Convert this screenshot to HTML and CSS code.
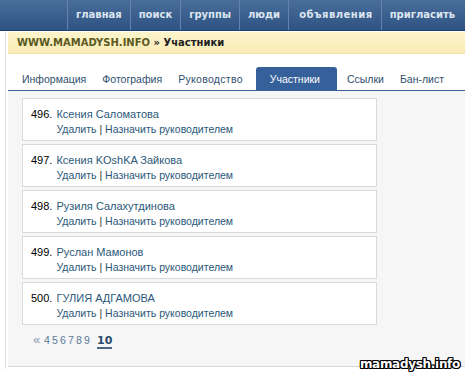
FILE: index.html
```html
<!DOCTYPE html>
<html lang="ru">
<head>
    <meta charset="UTF-8">
    <title>Участники</title>
    <link rel="stylesheet" href="styles.css">
</head>
<body>
    <div class="topbar">
        <div class="logo-space"></div>
        <nav class="menu">
            <a href="#">главная</a>
            <a href="#">поиск</a>
            <a href="#">группы</a>
            <a href="#">люди</a>
            <a href="#">объявления</a>
            <a href="#">пригласить</a>
        </nav>
    </div>

    <div class="page">
        <div class="crumbs">
            <span class="site">WWW.MAMADYSH.INFO</span> » Участники
        </div>

        <ul class="tabs">
            <li><a href="#">Информация</a></li>
            <li><a href="#">Фотография</a></li>
            <li><a href="#">Руководство</a></li>
            <li class="active"><a href="#">Участники</a></li>
            <li><a href="#">Ссылки</a></li>
            <li><a href="#">Бан-лист</a></li>
        </ul>

        <div class="content">
            <div class="member">
                <span class="num">496.</span>
                <div class="info">
                    <a class="name" href="#">Ксения Саломатова</a>
                    <div class="actions"><a href="#">Удалить</a> | <a href="#">Назначить руководителем</a></div>
                </div>
            </div>
            <div class="member">
                <span class="num">497.</span>
                <div class="info">
                    <a class="name" href="#">Ксения KOshKA Зайкова</a>
                    <div class="actions"><a href="#">Удалить</a> | <a href="#">Назначить руководителем</a></div>
                </div>
            </div>
            <div class="member">
                <span class="num">498.</span>
                <div class="info">
                    <a class="name" href="#">Рузиля Салахутдинова</a>
                    <div class="actions"><a href="#">Удалить</a> | <a href="#">Назначить руководителем</a></div>
                </div>
            </div>
            <div class="member">
                <span class="num">499.</span>
                <div class="info">
                    <a class="name" href="#">Руслан Мамонов</a>
                    <div class="actions"><a href="#">Удалить</a> | <a href="#">Назначить руководителем</a></div>
                </div>
            </div>
            <div class="member">
                <span class="num">500.</span>
                <div class="info">
                    <a class="name" href="#">ГУЛИЯ АДГАМОВА</a>
                    <div class="actions"><a href="#">Удалить</a> | <a href="#">Назначить руководителем</a></div>
                </div>
            </div>

            <div class="pager">
                <a class="prev" href="#">«</a>
                <a href="#">4</a>
                <a href="#">5</a>
                <a href="#">6</a>
                <a href="#">7</a>
                <a href="#">8</a>
                <a href="#">9</a>
                <span class="current">10</span>
            </div>
        </div>
    </div>

    <div class="watermark">mamadysh.info</div>
</body>
</html>
```

FILE: styles.css
```css
:root {
    --bar-top: #4a6e9a;
    --bar-bottom: #2e5383;
    --link-color: #2b587a;
    --tab-blue: #36609a;
    --border-color: #dadada;
}

* {
    margin: 0;
    padding: 0;
    box-sizing: border-box;
}

body {
    font-family: 'Liberation Sans', Arial, sans-serif;
    font-size: 11px;
    color: #000;
    background-color: #fff;
    width: 465px;
    height: 374px;
    overflow: hidden;
    position: relative;
}

a {
    color: var(--link-color);
    text-decoration: none;
}

/* верхнее меню */
.topbar {
    display: flex;
    height: 31px;
    background: linear-gradient(to bottom, var(--bar-top), var(--bar-bottom));
    border-bottom: 1px solid #1f3f6a;
}

.logo-space {
    width: 67px;
    flex-shrink: 0;
}

.menu {
    display: flex;
}

.menu a {
    display: flex;
    align-items: center;
    padding: 0 8px 2px 8px;
    border-left: 1px solid #6384ad;
    color: #dde6f0;
    font-family: 'DejaVu Sans', sans-serif;
    font-weight: bold;
    font-size: 10px;
    white-space: nowrap;
}

.menu a:nth-child(5) {
    padding: 0 8px 2px 10px;
    letter-spacing: 0.5px;
}

.page {
    margin-left: 5px;
    margin-top: 1px;
    border-left: 1px solid #e2e2e2;
    height: 337px;
}

.crumbs {
    margin-left: 2px;
    height: 22px;
    padding: 5px 0 0 9px;
    background: linear-gradient(to bottom, #fdf4cc, #f8ebb6);
    border-bottom: 1px solid #efe2ae;
    font-family: 'DejaVu Sans', sans-serif;
    font-size: 10px;
    font-weight: bold;
    color: #1e1e1e;
}

.crumbs .site {
    color: #5c5a1e;
}

/* вкладки */
.tabs {
    list-style: none;
    display: flex;
    align-items: flex-end;
    margin-left: 2px;
    padding: 13px 0 0 6px;
    height: 37px;
    border-bottom: 1px solid var(--tab-blue);
}

.tabs li a {
    display: block;
    height: 23px;
    line-height: 24px;
    padding: 0 8px;
    color: #2f4f6e;
    font-size: 10.5px;
}

.tabs li:nth-child(3) a {
    letter-spacing: 0.3px;
}

.tabs li.active a {
    margin: 0 2px 0 5px;
    padding: 0 17px 0 14px;
    background-color: var(--tab-blue);
    color: #fff;
    border-radius: 3px 3px 0 0;
}

/* список участников */
.content {
    margin-left: 2px;
    height: 276px;
    padding: 7px 0 0 14px;
    background-color: #f6f6f6;
    border-bottom: 1px solid #d8d8d8;
}

.member {
    display: flex;
    gap: 4px;
    width: 355px;
    height: 43px;
    margin-bottom: 3px;
    padding: 8px 8px 0 8px;
    background-color: #fff;
    border: 1px solid var(--border-color);
    line-height: 15px;
}

.member .num,
.member .name {
    font-size: 11px;
}

.actions {
    color: #333;
    font-size: 10.5px;
}

.pager {
    display: flex;
    align-items: baseline;
    gap: 2px;
    padding: 4px 0 0 11px;
    font-size: 10.5px;
}

.pager a {
    color: #5c7a98;
    width: 6px;
}

.pager .prev {
    color: #8a9bb0;
    font-size: 13px;
    width: 9px;
}

.pager .current {
    margin-left: 5px;
    font-family: 'DejaVu Sans', sans-serif;
    font-weight: bold;
    font-size: 11px;
    color: #2b4a6c;
    border-bottom: 2px solid #4a6682;
    line-height: 12px;
}

/* водяной знак поверх страницы */
.watermark {
    position: absolute;
    right: 5px;
    bottom: 3px;
    font-family: 'DejaVu Sans', sans-serif;
    font-weight: bold;
    font-size: 12px;
    color: #fff;
    letter-spacing: -0.3px;
    text-shadow:
        1px 0 0 #000, -1px 0 0 #000, 0 1px 0 #000, 0 -1px 0 #000,
        1px 1px 0 #000, -1px -1px 0 #000, 1px -1px 0 #000, -1px 1px 0 #000;
}
```
